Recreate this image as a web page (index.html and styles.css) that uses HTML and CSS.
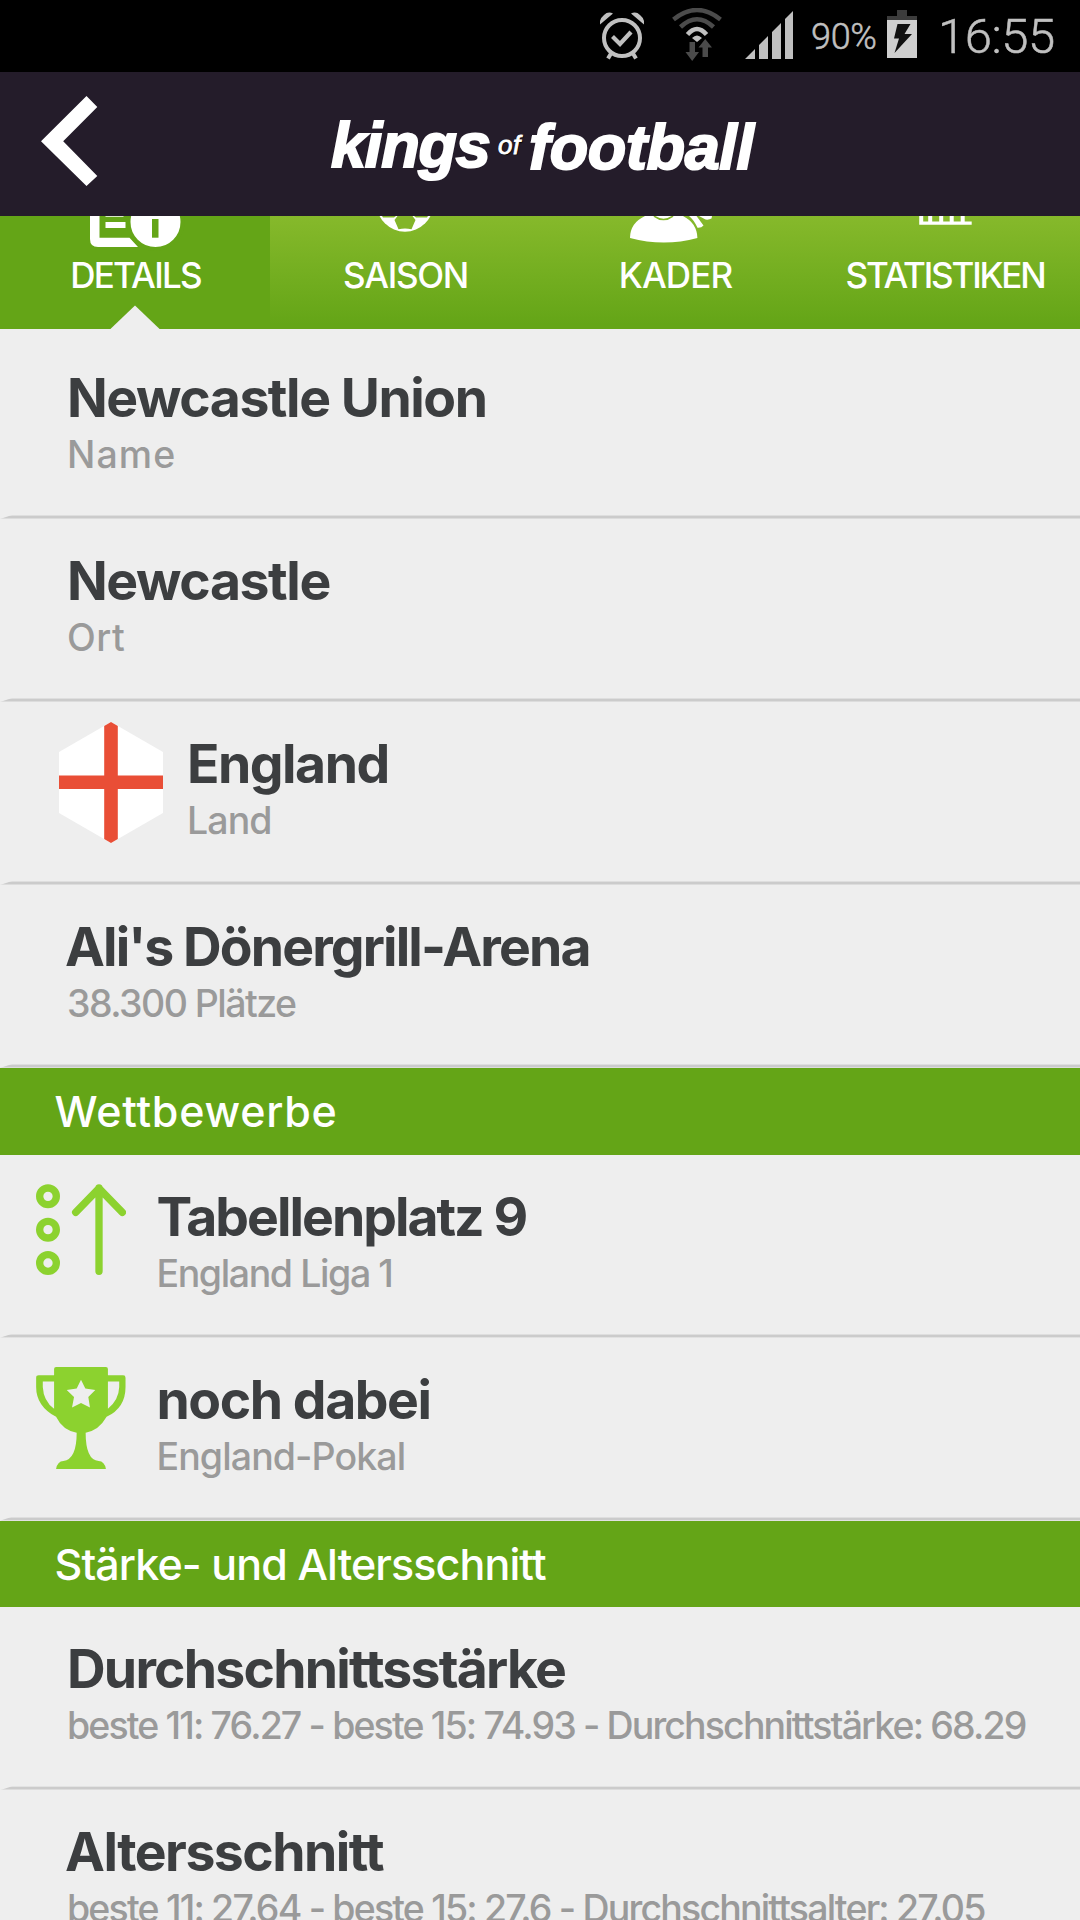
FILE: index.html
```html
<!DOCTYPE html>
<html lang="de">
<head>
<meta charset="utf-8">
<title>Kings of Football</title>
<link rel="stylesheet" href="styles.css">
</head>
<body>
<div class="statusbar">
  <svg class="alarm" viewBox="0 0 44 48" width="44" height="48">
    <g fill="none" stroke="#c0c0c0">
      <circle cx="22" cy="26" r="18" stroke-width="4"/>
      <path d="M12.5 24.5l7.5 7.5 11-12" stroke-width="4.2"/>
      <path d="M11 41.500l-3 5M33 41.500l3 5" stroke-width="4"/>
    </g>
    <path d="M0 12.500Q-1 7 4 3Q8-1 13 1.500ZM44 12.500Q45 7 40 3Q36-1 31 1.500Z" fill="#c0c0c0"/>
  </svg>
  <svg class="wifi" viewBox="0 0 50 53" width="50" height="53">
    <g fill="none">
      <path d="M1.500 11.500Q25-7.500 48.500 11.500" stroke="#4b4b4b" stroke-width="4.500"/>
      <path d="M8.500 19Q25 3.500 41.500 19" stroke="#4b4b4b" stroke-width="4.500"/>
      <path d="M15.500 26.500Q25 15.500 34.500 26.500" stroke="#c0c0c0" stroke-width="4.500"/>
    </g>
    <path d="M20 30Q25 25 30 30L25 34Z" fill="#c0c0c0"/>
    <path d="M17.500 34h5.500v10h4L20.200 53 13.500 44h4ZM30.500 49h5.500V39.500h4L33.200 31 26.500 39.500h4Z" fill="#4b4b4b"/>
  </svg>
  <svg class="signal" viewBox="0 0 48 48" width="48" height="48">
    <path d="M0 48L10 38v10ZM14 48V34l9-9v23ZM27 48V21l9-9v36ZM40 48V8l8-8v48Z" fill="#c0c0c0"/>
  </svg>
  <span class="percent">90%</span>
  <svg class="battery" viewBox="0 0 30 48" width="30" height="48">
    <path d="M10 0h10v6h10v5H0V6h10Z" fill="#3c3c3c"/>
    <path d="M0 10h30v38H0Z" fill="#cfcfcf"/>
    <path d="M10.500 14h13L17.500 24H25L7.500 43l4.500-14.500H7Z" fill="#111"/>
  </svg>
  <span class="clock">16:55</span>
</div>

<header class="header">
  <svg class="back" viewBox="0 0 57 90" width="57" height="90"><path d="M0 45.300L45.500 0 56.300 11 22.200 45.300 56.300 80 45.500 90Z" fill="#fff"/></svg>
  <div class="logo"><span class="kings">kings</span><span class="of">of</span><span class="football">football</span></div>
</header>

<nav class="tabs">
  <div class="tab active">
    <svg class="tab-icon" viewBox="0 0 270 38" width="270" height="38">
      <path d="M90 0h9.500v21.700H129.500L138 31H98Q90 31 90 23Z" fill="#fff"/>
      <path d="M105.500 0h18v.8h-18ZM105.500 6H125.500v6h-20Z" fill="#fff"/>
      <circle cx="155.500" cy="6" r="27" fill="#fff" stroke="#64a517" stroke-width="4"/>
      <path d="M152 3h6.500v18.700H152Z" fill="#64a517"/>
    </svg>
    <span class="label details">DETAILS</span>
  </div>
  <div class="tab">
    <svg class="tab-icon" viewBox="0 0 270 38" width="270" height="38">
      <circle cx="135" cy="-12.800" r="28.500" fill="#fff"/>
      <path d="M112 0h14l-2 1.500h-11ZM144 0h14l-1 1.500h-11ZM124.500 4l3-4h15l3 4-4 9.300q-6.500-1.500-13 0Z" fill="#83b528"/>
    </svg>
    <span class="label saison">SAISON</span>
  </div>
  <div class="tab">
    <svg class="tab-icon" viewBox="0 0 270 38" width="270" height="38">
      <path d="M105 0H143Q157 7 157.400 22Q124 31 90 22Q90 7 105 0Z" fill="#fff"/>
      <path d="M114 0Q123.500 7 133 0" fill="none" stroke="#83b528" stroke-width="1.600"/>
      <path d="M149 0h7.500l7 9.500q-2 2.500-6 2.200Q154 4 149 0ZM159 0h13l-.5 2.500q-2.500 1.500-6 1Z" fill="#fff"/>
    </svg>
    <span class="label kader">KADER</span>
  </div>
  <div class="tab">
    <svg class="tab-icon" viewBox="0 0 270 38" width="270" height="38">
      <path d="M109.200 0h4v5.500h5V0h4v5.500h7V0h4v5.500h6.500V0h4v5.500h7V0h4v5.500h7v3.200H109.200Z" fill="#fff"/>
    </svg>
    <span class="label statistiken">STATISTIKEN</span>
  </div>
</nav>

<main class="list">
  <div class="row first"><div class="text"><div class="title t-union">Newcastle Union</div><div class="sub s-name">Name</div></div></div>
  <div class="row"><div class="text"><div class="title t-city">Newcastle</div><div class="sub s-ort">Ort</div></div></div>
  <div class="row country">
    <svg class="flag" viewBox="0 0 104 121" width="104" height="121">
      <path d="M52 0L104 30V91L52 121 0 91V30Z" fill="#fff"/>
      <path d="M45.200 4L52 0l6.800 4V53.500H104V67H58.800v50L52 121l-6.800-4V67H0V53.500H45.200Z" fill="#e94e36"/>
    </svg>
    <div class="text"><div class="title t-country">England</div><div class="sub s-land">Land</div></div>
  </div>
  <div class="row"><div class="text"><div class="title t-arena">Ali's Dönergrill-Arena</div><div class="sub s-seats">38.300 Plätze</div></div></div>

  <h2 class="section"><span class="h-comp">Wettbewerbe</span></h2>
  <div class="row competition">
    <svg class="league" viewBox="108 102 270 273" width="90" height="91">
      <g fill="none" stroke="#8cd22f" stroke-width="22">
        <circle cx="144" cy="139" r="25"/><circle cx="144" cy="239" r="25"/><circle cx="144" cy="339" r="25"/>
        <path d="M297 364V114M227 187L297 115 367 187" stroke-linecap="round" stroke-linejoin="round"/>
      </g>
    </svg>
    <div class="text"><div class="title t-table">Tabellenplatz 9</div><div class="sub s-liga">England Liga 1</div></div>
  </div>
  <div class="row competition">
    <svg class="trophy" viewBox="108 652 270 307" width="90" height="102">
      <path fill="#8cd22f" fill-rule="evenodd" d="M168 652H318Q324 652 324 658V677H370Q377 677 377 684V712Q377 775 320 802Q297 843 257 850Q257 932 296 935Q314 936 318 959H168Q172 936 190 935Q230 930 230 850Q188 843 168 802Q108 770 108 712V684Q108 677 116 677H162V658Q162 652 168 652ZM128 696V712Q130 754 162 778V696ZM324 696V778Q357 750 358 712V696ZM243 690L230 717 200 721 222 742 216 774 243 760 270 774 265 742 286 721 256 717Z"/>
    </svg>
    <div class="text"><div class="title t-cup">noch dabei</div><div class="sub s-cup">England-Pokal</div></div>
  </div>

  <h2 class="section"><span class="h-avg">Stärke- und Altersschnitt</span></h2>
  <div class="row"><div class="text"><div class="title t-strength">Durchschnittsstärke</div><div class="sub s-strength">beste 11: 76.27 - beste 15: 74.93 - Durchschnittstärke: 68.29</div></div></div>
  <div class="row"><div class="text"><div class="title t-age">Altersschnitt</div><div class="sub s-age">beste 11: 27.64 - beste 15: 27.6 - Durchschnittsalter: 27.05</div></div></div>
</main>
</body>
</html>
```
FILE: styles.css
```css
* { box-sizing: border-box; }

body {
  margin: 0;
  width: 1080px;
  height: 1920px;
  overflow: hidden;
  display: flex;
  flex-direction: column;
  background: #eee;
  font-family: Inter, "Open Sans", sans-serif;
  white-space: nowrap;
}

svg { display: block; flex: none; }

/* Status bar */
.statusbar {
  flex: none;
  height: 72px;
  background: #000;
  color: #c0c0c0;
  font-family: Roboto, sans-serif;
  font-weight: 300;
  display: flex;
  align-items: flex-start;
  padding-left: 600px;
  -webkit-text-stroke: 0.5px #c0c0c0;
}
.alarm { margin-top: 12px; }
.wifi { margin: 8px 0 0 28px; }
.signal { margin: 11px 0 0 23px; }
.percent { width: 76px; margin: 16px 0 0 18px; font-size: 36px; line-height: 42px; letter-spacing: -0.3px; }
.battery { margin: 10px 0 0 0; }
.clock { margin: 8px 0 0 21px; font-size: 49px; line-height: 58px; letter-spacing: -0.46px; }

/* App header */
.header {
  flex: none;
  height: 144px;
  background: #241c2a;
  display: flex;
  align-items: flex-start;
}
.back { margin: 24px 0 0 41px; }
.logo {
  display: flex;
  margin: 38px 0 0 233px;
  color: #fff;
  font: italic bold 63px/70px "Liberation Sans", sans-serif;
}
.kings { width: 167px; letter-spacing: -1.2px; -webkit-text-stroke: 2px #fff; }
.of { width: 31px; margin-top: 20px; font-size: 26px; font-weight: 400; line-height: 30px; letter-spacing: 0.5px; text-shadow: 1px 1px 1px #000; -webkit-text-stroke: 0.8px #fff; }
.football { margin-top: 2px; letter-spacing: -0.35px; -webkit-text-stroke: 2px #fff; }

/* Tabs: icons are scrolled half under the header */
.tabs {
  flex: none;
  height: 113.4px;
  display: grid;
  grid-template-columns: repeat(4, 270px);
  background: linear-gradient(#86b92b, #64a517 96%);
}
.tab {
  position: relative;
  display: flex;
  flex-direction: column;
  align-items: center;
  overflow: hidden;
}
.tab.active { background: #64a517; }
.tab.active::after {
  content: "";
  position: absolute;
  left: 110px;
  bottom: 0;
  width: 50px;
  height: 24px;
  background: #eee;
  clip-path: polygon(50% 0, 100% 100%, 0 100%);
}
.label { margin-top: -0.5px; color: #fff; font-size: 35px; font-weight: 550; line-height: 42px; }
.details { padding-left: 1px; letter-spacing: -1.75px; }
.saison { padding-left: 1px; letter-spacing: -1.3px; }
.kader { padding-left: 1px; letter-spacing: -0.9px; }
.statistiken { letter-spacing: -2.2px; }

/* Detail list */
.list { padding-top: 6.6px; }
.row {
  position: relative;
  height: 183px;
  padding-left: 67px;
  display: flex;
  align-items: flex-start;
}
.row::after {
  content: "";
  position: absolute;
  left: 0;
  right: 0;
  bottom: 0;
  height: 4px;
  background: linear-gradient(#dedede 0 1px, #cbcbcb 1px 3px, #dcdcdc 3px);
  clip-path: polygon(0 100%, 12px 0, 100% 0, 100% 100%);
}
.text { padding-top: 30px; }
.title { color: #3c3e40; font-size: 53.5px; font-weight: 700; line-height: 64px; }
.sub { margin-top: 2px; color: #9a9a9a; font-size: 37.5px; font-weight: 500; line-height: 46px; }

.country { padding-left: 59px; gap: 24px; }
.flag { margin-top: 20px; }
.competition { padding-left: 36px; gap: 30.5px; }
.league, .trophy { margin-top: 29px; }

.t-union { letter-spacing: -1.47px; }
.t-city { letter-spacing: -1.44px; }
.t-country { letter-spacing: -1.5px; }
.t-arena { margin-left: -2px; letter-spacing: -1.87px; }
.t-table { letter-spacing: -1.99px; }
.t-cup { letter-spacing: -1.44px; }
.t-strength { letter-spacing: -1.78px; }
.t-age { margin-left: -2px; letter-spacing: -1.51px; }
.s-name { letter-spacing: 1.1px; }
.s-ort { letter-spacing: 0.5px; }
.s-land { letter-spacing: -0.9px; }
.s-seats { letter-spacing: -1.55px; }
.s-liga { letter-spacing: -1.4px; }
.s-cup { letter-spacing: -0.9px; }
.s-strength { letter-spacing: -1.87px; }
.s-age { letter-spacing: -1.82px; }

.section {
  margin: 0;
  height: 86.7px;
  padding: 17px 0 0 54.5px;
  background: #64a517;
  color: #fff;
  font-size: 43px;
  font-weight: 550;
  line-height: 52px;
}
.h-comp { letter-spacing: 0.75px; }
.h-avg { letter-spacing: -0.9px; }
```
